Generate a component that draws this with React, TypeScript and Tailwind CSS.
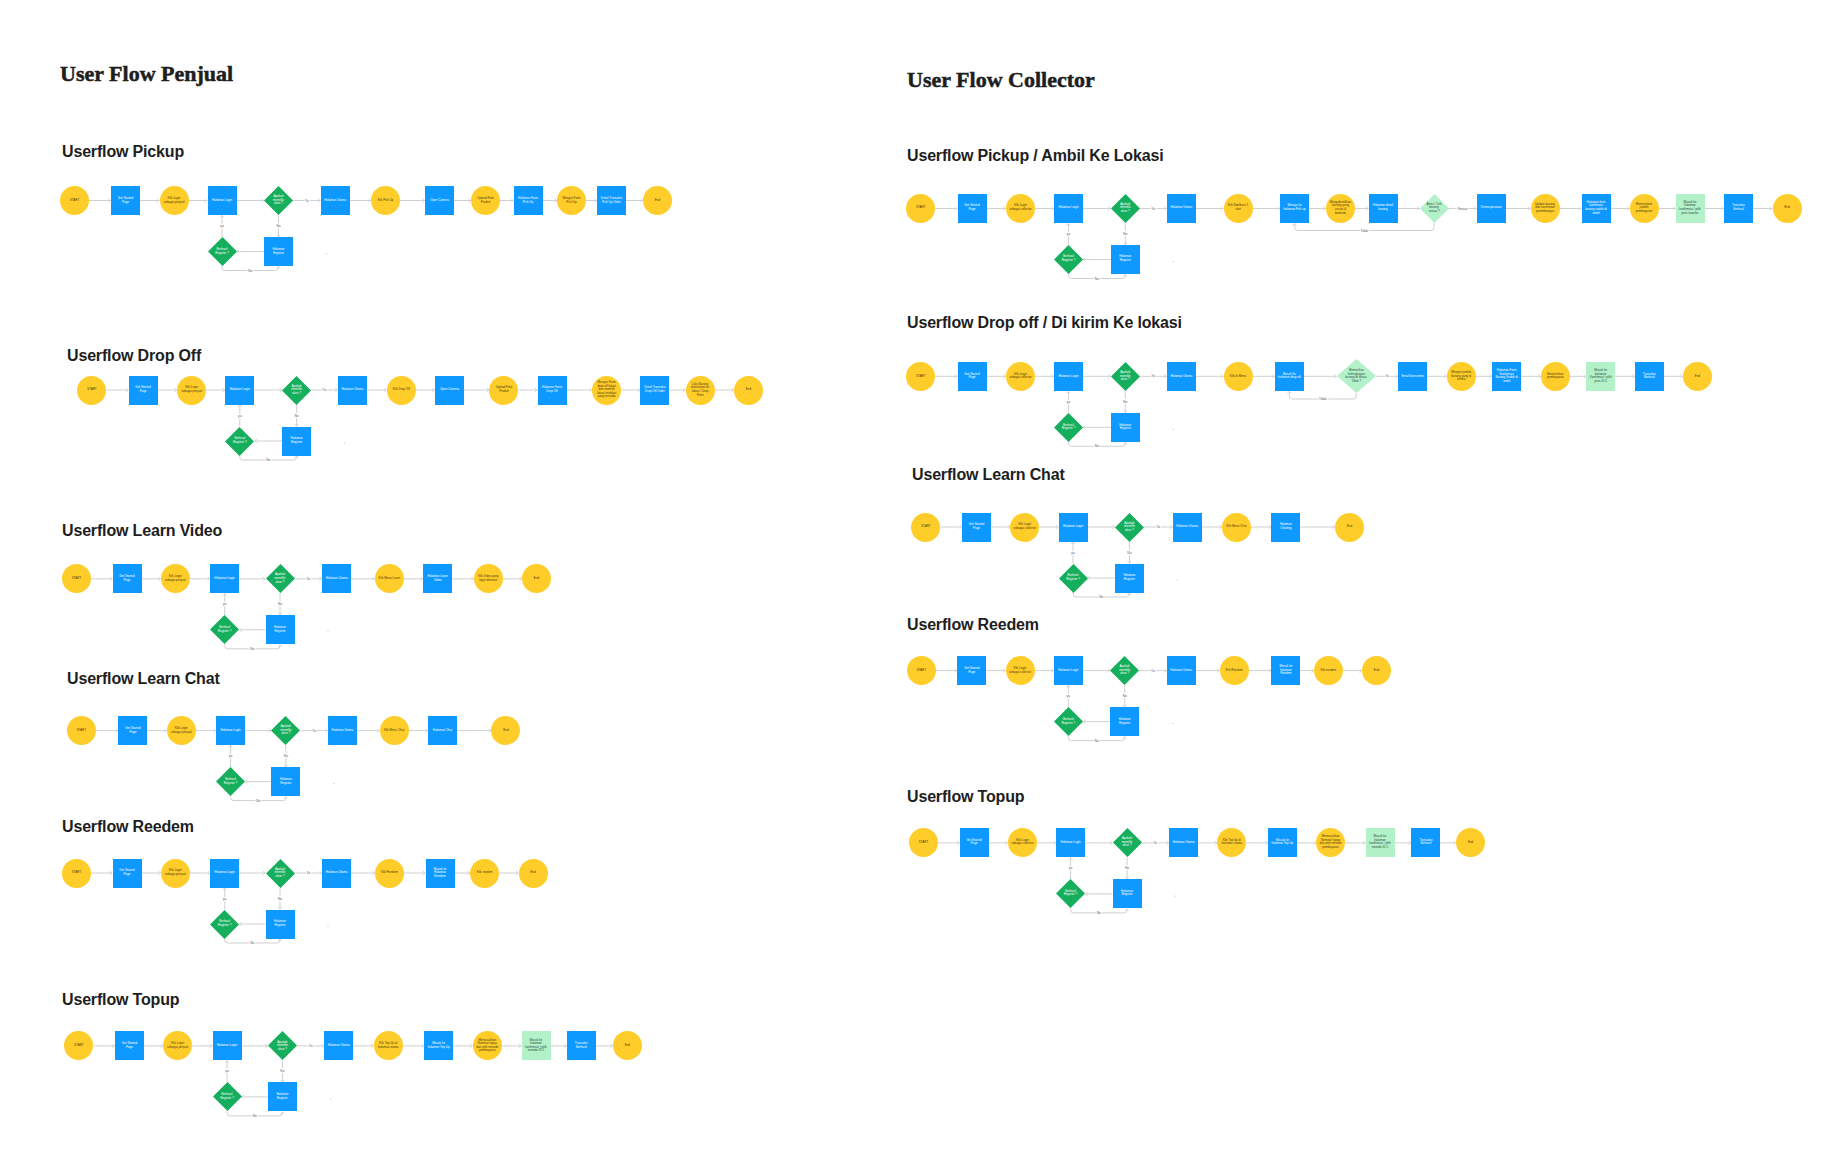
type Kind = 'c' | 'r' | 'd' | 'l' | 'ld';

interface FlowNode {
  k: Kind;
  t: string;
  x: number;
  w: number;
  h: number;
}

interface Flow {
  title: string;
  wrap: string;
  head: string;
  row: number;
  nodes: FlowNode[];
  pass?: string;
  back?: { from: number; to: number; y: number };
}

const LINE = '#d0d0d0';

const start = (role: string): [Kind, string][] => [
  ['c', 'START'],
  ['r', 'Get Started Page'],
  ['c', `Klik Login sebagai ${role}`],
  ['r', 'Halaman Login'],
  ['d', 'Apakah memiliki akun ?'],
  ['r', 'Halaman Utama'],
];

function build(items: [Kind, string][], xs: number[]): FlowNode[] {
  return items.map(([k, t], i) => ({ k, t, x: xs[i], w: 29, h: 29 }));
}

const penjual: Flow[] = [
  {
    title: 'Userflow Pickup',
    wrap: 'mt-[54px]',
    head: 'ml-[62px]',
    row: 38.5,
    nodes: build(
      [
        ...start('penjual'),
        ['c', 'Klik Pick Up'],
        ['r', 'Open Camera'],
        ['c', 'Upload Foto Produk'],
        ['r', 'Halaman Form Pick Up'],
        ['c', 'Mengisi Form Pick Up'],
        ['r', 'Detail Transaksi Pick Up Order'],
        ['c', 'End'],
      ],
      [74.5, 125.5, 174, 222, 278.5, 335, 385.5, 439.5, 485.5, 528, 571.5, 611.5, 657.5]
    ),
  },
  {
    title: 'Userflow Drop Off',
    wrap: 'mt-[74px]',
    head: 'ml-[67px]',
    row: 24,
    nodes: build(
      [
        ...start('penjual'),
        ['c', 'Klik Drop Off'],
        ['r', 'Open Camera'],
        ['c', 'Upload Foto Produk'],
        ['r', 'Halaman Form Drop Off'],
        ['c', 'Mengisi Form drop off lokasi dan memilih lokasi terdekat yang tersedia'],
        ['r', 'Detail Transaksi Drop Off Order'],
        ['c', 'Lalu Barang diantarkan ke lokasi / Drop Point'],
        ['c', 'End'],
      ],
      [91.9, 143, 191.7, 239.8, 296.6, 352.3, 401.3, 449.4, 503.9, 552, 606.7, 654.9, 700.1, 748.5]
    ),
  },
  {
    title: 'Userflow Learn Video',
    wrap: 'mt-[45px]',
    head: 'ml-[62px]',
    row: 37.8,
    nodes: build(
      [
        ...start('penjual'),
        ['c', 'Klik Menu Learn'],
        ['r', 'Halaman Learn Video'],
        ['c', 'Klik Video yang ingin ditonton'],
        ['c', 'End'],
      ],
      [76.5, 127, 175.3, 224.7, 280, 336.5, 389.4, 437.7, 488.2, 536.5]
    ),
  },
  {
    title: 'Userflow Learn Chat',
    wrap: 'mt-[18px]',
    head: 'ml-[67px]',
    row: 41.6,
    nodes: build(
      [...start('penjual'), ['c', 'Klik Menu Chat'], ['r', 'Halaman Chat'], ['c', 'End']],
      [81.2, 132.9, 181.2, 230.6, 285.9, 342.4, 394.1, 442.4, 505.9]
    ),
  },
  {
    title: 'Userflow Reedem',
    wrap: 'mt-[18px]',
    head: 'ml-[62px]',
    row: 36,
    nodes: build(
      [
        ...start('penjual'),
        ['c', 'Klik Reedem'],
        ['r', 'Masuk ke Halaman Reedem'],
        ['c', 'Klik reedem'],
        ['c', 'End'],
      ],
      [76.5, 127, 175.3, 224.7, 280, 336.5, 389.4, 440, 484.7, 533]
    ),
  },
  {
    title: 'Userflow Topup',
    wrap: 'mt-[43px]',
    head: 'ml-[62px]',
    row: 35.9,
    nodes: build(
      [
        ...start('penjual'),
        ['c', 'Klik Top Up di halaman utama'],
        ['r', 'Masuk ke halaman Top Up'],
        ['c', 'Memasukkan Nominal topup dan pilih metode pembayaran'],
        ['l', 'Masuk ke halaman konfirmasi / pilih metode ID 5'],
        ['r', 'Transaksi Berhasil'],
        ['c', 'End'],
      ],
      [78.8, 129.4, 177.6, 227, 282.4, 338.8, 388.2, 438.7, 487.3, 536, 581.3, 627.3]
    ),
  },
];

const dropNodes = build(
  [
    ...start('collector'),
    ['c', 'Klik di Menu'],
    ['r', 'Masuk Ke halaman drop off'],
    ['ld', 'Memeriksa kelengkapan barang di lokasi, Tidak ?'],
    ['r', 'Email konsumen'],
    ['c', 'Mengisi jumlah barang yang di terima'],
    ['r', 'Halaman Form Konfirmasi Barang Sudah di ambil'],
    ['c', 'Menentukan pembayaran'],
    ['l', 'Masuk ke halaman Konfirmasi / pilih jenis ID 5'],
    ['r', 'Transaksi Berhasil'],
    ['c', 'End'],
  ],
  [75.7, 127, 175.5, 223.5, 280.3, 336.3, 393, 444.3, 511.3, 567.7, 616.3, 661.7, 710.3, 755.7, 804.3, 852.3]
);
dropNodes[8] = { ...dropNodes[8], w: 39, h: 34 };

const collector: Flow[] = [
  {
    title: 'Userflow Pickup / Ambil Ke Lokasi',
    wrap: 'mt-[52px]',
    head: 'ml-[62px]',
    row: 42.5,
    pass: 'Sesuai',
    back: { from: 10, to: 7, y: 64.5 },
    nodes: build(
      [
        ...start('collector'),
        ['c', 'Klik Notifikasi 1 chat'],
        ['r', 'Menuju ke halaman Pick up'],
        ['c', 'Mengidentifikasi barang yang sesuai & berbeda'],
        ['r', 'Halaman detail barang'],
        ['ld', 'Antar / Cek barang sesuai ?'],
        ['r', 'Terima pesanan'],
        ['c', 'Update barang dan konfirmasi penimbangan'],
        ['r', 'Halaman form konfirmasi barang sudah di ambil'],
        ['c', 'Menentukan jumlah pembayaran'],
        ['l', 'Masuk ke halaman konfirmasi / pilih jenis transfer'],
        ['r', 'Transaksi Berhasil'],
        ['c', 'End'],
      ],
      [75.7, 127, 175.5, 223.5, 280.3, 336.3, 393, 449.7, 495.5, 538, 589, 646, 700, 751, 799, 845, 893.6, 942]
    ),
  },
  {
    title: 'Userflow Drop off / Di kirim Ke lokasi',
    wrap: 'mt-[37.5px]',
    head: 'ml-[62px]',
    row: 43.3,
    pass: 'Ya',
    back: { from: 8, to: 7, y: 66 },
    nodes: dropNodes,
  },
  {
    title: 'Userflow Learn Chat',
    wrap: 'mt-[22px]',
    head: 'ml-[67px]',
    row: 42,
    nodes: build(
      [...start('collector'), ['c', 'Klik Menu Chat'], ['r', 'Halaman Chatting'], ['c', 'End']],
      [80.9, 131.5, 179.7, 228, 284.4, 342.1, 391.5, 440.9, 504.5]
    ),
  },
  {
    title: 'Userflow Reedem',
    wrap: 'mt-[20px]',
    head: 'ml-[62px]',
    row: 35.6,
    nodes: build(
      [
        ...start('collector'),
        ['c', 'Klik Reedem'],
        ['r', 'Masuk ke halaman Reedem'],
        ['c', 'Klik reedem'],
        ['c', 'End'],
      ],
      [76.2, 126.8, 175, 223.3, 279.7, 336.2, 389.1, 440.9, 483.3, 531.5]
    ),
  },
  {
    title: 'Userflow Topup',
    wrap: 'mt-[41.5px]',
    head: 'ml-[62px]',
    row: 35.9,
    nodes: build(
      [
        ...start('collector'),
        ['c', 'Klik Top Up di halaman utama'],
        ['r', 'Masuk ke halaman Top Up'],
        ['c', 'Memasukkan Nominal topup dan pilih metode pembayaran'],
        ['l', 'Masuk ke halaman konfirmasi / pilih metode ID 5'],
        ['r', 'Transaksi Berhasil'],
        ['c', 'End'],
      ],
      [78.5, 129.1, 177.4, 225.6, 282.1, 338.5, 386.8, 437.4, 485.6, 535, 580.9, 625.6]
    ),
  },
];

const box: Record<Kind, string> = {
  c: 'rounded-full bg-[#ffcd29] text-[#4a3b10]',
  r: 'bg-[#0d99ff] text-white',
  d: 'text-white',
  l: 'bg-[#b3f1c9] text-[#2b4a3c]',
  ld: 'text-[#2b4a3c]',
};

function Shape({ n, y }: { n: FlowNode; y: number }) {
  const diamond = n.k === 'd' || n.k === 'ld';
  return (
    <div
      className={`absolute flex items-center justify-center ${box[n.k]}`}
      style={{ left: n.x - n.w / 2, top: y - n.h / 2, width: n.w, height: n.h }}
    >
      {diamond && (
        <svg className="absolute inset-0" width={n.w} height={n.h} viewBox={`0 0 ${n.w} ${n.h}`}>
          <polygon
            points={`${n.w / 2},0 ${n.w},${n.h / 2} ${n.w / 2},${n.h} 0,${n.h / 2}`}
            fill={n.k === 'd' ? '#14ae5c' : '#b3f1c9'}
          />
        </svg>
      )}
      <span
        className={`relative text-center text-[3px] leading-[3.6px] ${diamond ? 'px-[7px]' : 'px-[3px]'}`}
      >
        {n.t}
      </span>
    </div>
  );
}

function Arrow({ x, y, dir }: { x: number; y: number; dir: 'r' | 'l' | 'u' | 'd' }) {
  const s = 2;
  const d = {
    r: `M${x - s} ${y - s} L${x} ${y} L${x - s} ${y + s}`,
    l: `M${x + s} ${y - s} L${x} ${y} L${x + s} ${y + s}`,
    u: `M${x - s} ${y + s} L${x} ${y} L${x + s} ${y + s}`,
    d: `M${x - s} ${y - s} L${x} ${y} L${x + s} ${y - s}`,
  }[dir];
  return <path d={d} fill="none" stroke={LINE} strokeWidth={0.9} />;
}

function Tag({ x, y, t }: { x: number; y: number; t: string }) {
  return (
    <text
      x={x}
      y={y + 1}
      textAnchor="middle"
      fontSize={3.2}
      fill="#555"
      stroke="#fff"
      strokeWidth={2}
      paintOrder="stroke"
      fontFamily="Liberation Sans, sans-serif"
    >
      {t}
    </text>
  );
}

function Diagram({ f }: { f: Flow }) {
  const { nodes, row } = f;
  const low = row + 51;
  const login = nodes[3];
  const ask = nodes[4];
  const retry: FlowNode = { k: 'd', t: 'Berhasil Register ?', x: login.x, w: 29, h: 29 };
  const register: FlowNode = { k: 'r', t: 'Halaman Register', x: ask.x, w: 29, h: 29 };
  const bottom = low + 19;

  return (
    <div className="relative h-[110px]">
      <svg className="absolute inset-0 h-full w-full overflow-visible">
        {nodes.slice(0, -1).map((a, i) => {
          const b = nodes[i + 1];
          const x1 = a.x + a.w / 2;
          const x2 = b.x - b.w / 2;
          const label = a.k === 'd' ? 'Ya' : a.k === 'ld' ? f.pass : undefined;
          return (
            <g key={i}>
              <line x1={x1} y1={row} x2={x2} y2={row} stroke={LINE} strokeWidth={1} />
              <Arrow x={x2 - 0.5} y={row} dir="r" />
              {label && <Tag x={(x1 + x2) / 2} y={row} t={label} />}
            </g>
          );
        })}

        {/* belum punya akun -> register */}
        <line x1={ask.x} y1={row + 14.5} x2={ask.x} y2={low - 14.5} stroke={LINE} />
        <Arrow x={ask.x} y={low - 15} dir="d" />
        <Tag x={ask.x} y={(row + low) / 2} t="No" />

        <line x1={ask.x - 14.5} y1={low} x2={login.x + 14.5} y2={low} stroke={LINE} />
        <Arrow x={login.x + 15} y={low} dir="l" />

        <line x1={login.x} y1={low - 14.5} x2={login.x} y2={row + 14.5} stroke={LINE} />
        <Arrow x={login.x} y={row + 15} dir="u" />
        <Tag x={login.x} y={(row + low) / 2} t="ya" />

        <path
          d={`M${login.x} ${low + 14.5} V${bottom - 3} Q${login.x} ${bottom} ${login.x + 3} ${bottom} H${ask.x - 3} Q${ask.x} ${bottom} ${ask.x} ${bottom - 3} V${low + 15}`}
          fill="none"
          stroke={LINE}
        />
        <Arrow x={ask.x} y={low + 15} dir="u" />
        <Tag x={(login.x + ask.x) / 2} y={bottom} t="No" />

        <circle cx={ask.x + 48} cy={low + 2} r={0.5} fill="#aaa" />

        {f.back &&
          (() => {
            const a = nodes[f.back.from];
            const b = nodes[f.back.to];
            const y = f.back.y;
            return (
              <g>
                <path
                  d={`M${a.x} ${row + a.h / 2} V${y - 3} Q${a.x} ${y} ${a.x - 3} ${y} H${b.x + 3} Q${b.x} ${y} ${b.x} ${y - 3} V${row + 15}`}
                  fill="none"
                  stroke={LINE}
                />
                <Arrow x={b.x} y={row + 15} dir="u" />
                <Tag x={(a.x + b.x) / 2} y={y} t="Tidak" />
              </g>
            );
          })()}
      </svg>

      {nodes.map((n, i) => (
        <Shape key={i} n={n} y={row} />
      ))}
      <Shape n={retry} y={low} />
      <Shape n={register} y={low} />
    </div>
  );
}

function Section({ f }: { f: Flow }) {
  return (
    <section className={f.wrap}>
      <h2
        className={`h-[20px] text-[16px] leading-[20px] font-bold tracking-[-0.01em] text-[#1e1e1e] ${f.head}`}
      >
        {f.title}
      </h2>
      <Diagram f={f} />
    </section>
  );
}

export default function App() {
  return (
    <div className="flex min-h-[1166px] w-[1845px] bg-white font-['Liberation_Sans',sans-serif]">
      {/* Penjual */}
      <div className="w-[845px] shrink-0 pt-[60px]">
        <h1 className="ml-[60px] text-[22px] leading-[28px] font-bold text-[#1e1e1e] font-['Liberation_Serif',serif] [-webkit-text-stroke:0.5px_#1e1e1e]">
          User Flow Penjual
        </h1>
        {penjual.map((f) => (
          <Section key={f.title} f={f} />
        ))}
      </div>

      {/* Collector */}
      <div className="flex-1 pt-[65.5px]">
        <h1 className="ml-[62px] text-[22px] leading-[28px] font-bold text-[#1e1e1e] font-['Liberation_Serif',serif] [-webkit-text-stroke:0.5px_#1e1e1e]">
          User Flow Collector
        </h1>
        {collector.map((f) => (
          <Section key={f.title} f={f} />
        ))}
      </div>
    </div>
  );
}
